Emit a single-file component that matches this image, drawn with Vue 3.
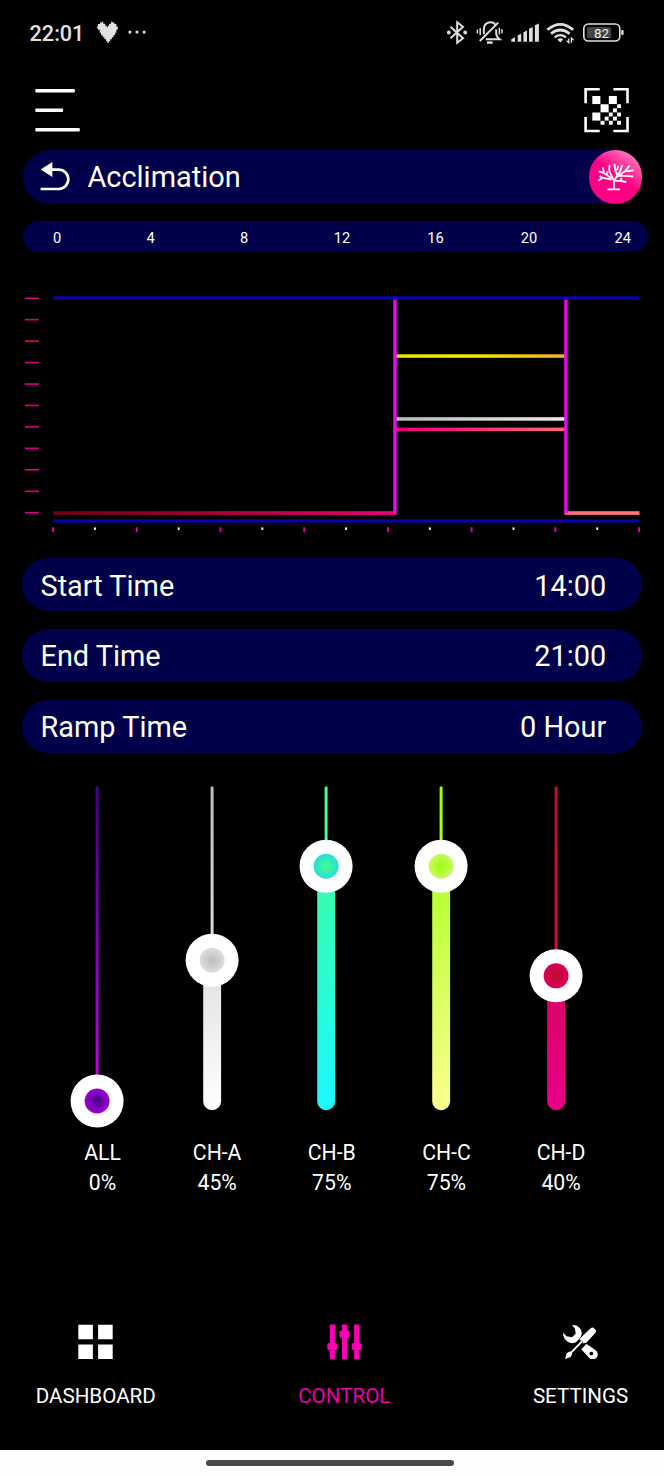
<template>
  <div class="screen">
    <header class="status-bar">
      <span class="clock">22:01</span>
      <svg class="heart" viewBox="96 21 22 23" width="22" height="23">
        <path
          d="M96.5 26.5h1.5v-2.5h2v-1.5h2v-.7h1.3v2h2v2h1.4v1.3h1v-1.3h1.4v-2h2v-2h1.3v.7h2v1.5h2v2.5h1.3v3.2h-1.3v3h-1.3v2.5h-1.6v2h-1.6v2h-1.6v2h-1.5v1.8h-1.3v-1.8h-1.5v-2h-1.6v-2h-1.6v-2h-1.8v-2.5h-1.3v-3h-1.4z"
          fill="#e2e2e2"
        />
      </svg>
      <svg class="dots" viewBox="128 30 18 5" width="18" height="5" fill="#d8d8d8">
        <circle cx="129.9" cy="32.1" r="1.6" />
        <circle cx="137" cy="32.1" r="1.6" />
        <circle cx="144.1" cy="32.1" r="1.6" />
      </svg>

      <div class="status-icons">
        <svg viewBox="446 20 22 25" width="22" height="25" fill="none" stroke="#dedede" stroke-width="2">
          <path d="M450.5 26.8L463 38.2L457.2 42.8V22.2L463 26.8L450.5 38.2" />
          <circle cx="448.8" cy="32.5" r="1.9" fill="#dedede" stroke="none" />
          <circle cx="465.2" cy="32.5" r="1.9" fill="#dedede" stroke="none" />
        </svg>
        <svg viewBox="475 20 28 25" width="28" height="25" fill="none" stroke="#dedede" stroke-width="2">
          <path d="M483.8 34.2V29.5C483.8 20.8 493.5 20.8 495.6 25.2" />
          <path d="M496.2 29.5V33.5Q496.5 37 499.6 39.3H485.8" />
          <path d="M498.2 22.6L479.8 41" />
          <path d="M487 42.6H492.6" stroke-width="2.4" />
          <path d="M477.4 29.5V33.5M480.2 28V35M499.4 27.8V34.5M502 29.2V33.3" stroke-width="1.5" />
        </svg>
        <svg viewBox="510 20 29 25" width="29" height="25" fill="#dedede">
          <path d="M511.3 41.7V39.2L515 37.2V41.7zM517.7 41.7V35.5L521.2 33.6V41.7zM523.4 41.7V32.2L527 30.4V41.7zM529 41.7V28.8L532.7 27V41.7zM534.9 41.7V25.3L538.9 23.4V41.7z" />
        </svg>
        <svg viewBox="546 20 29 25" width="29" height="25" fill="none" stroke="#dedede" stroke-width="2.7">
          <path d="M547.4 29.8Q560.3 18.8 573.2 29.8" />
          <path d="M551 33.8Q560.3 26.2 569.6 33.8" />
          <path d="M554.6 37.3Q560.3 33 566 37.3" stroke-width="2.3" />
          <path d="M557.4 39.4Q560.3 37.2 563.2 39.4L560.3 42.6z" fill="#dedede" stroke="none" />
          <path d="M568.8 38.5V42.8L566.6 40.6M571.4 42.8V38L573.6 40.2" stroke-width="1.3" />
        </svg>
        <svg viewBox="582 20 43 25" width="43" height="25">
          <rect x="583.8" y="24" width="36" height="17" rx="4.6" fill="none" stroke="#dedede" stroke-width="1.6" />
          <rect x="587" y="27" width="24.2" height="11.3" rx="2" fill="#444" />
          <rect x="621.2" y="29.9" width="2.4" height="5.2" rx="1" fill="#dedede" />
          <text x="601.6" y="37.8" class="battery-text">82</text>
        </svg>
      </div>
    </header>

    <div class="top-bar">
      <svg viewBox="35 88 45 45" width="45" height="45" fill="#fff">
        <rect x="35.3" y="89" width="39.6" height="3.5" rx="1" />
        <rect x="35.3" y="108.4" width="27.8" height="3.5" rx="1" />
        <rect x="35.3" y="127.9" width="44.5" height="3.5" rx="1" />
      </svg>
      <svg viewBox="584 88 45 45" width="45" height="45" fill="#fff">
        <path
          d="M599.7 89.3H585.6V103.2M613.4 89.3H627.5V103.2M585.6 117V131H599.7M627.5 117V131H613.4"
          fill="none"
          stroke="#fff"
          stroke-width="2.6"
        />
        <rect
          v-for="(c, i) in qrCells"
          :key="i"
          :x="592.3 + c[0] * 4.13"
          :y="96 + c[1] * 4.13"
          :width="c[2] * 4.13 - 0.2"
          :height="c[2] * 4.13 - 0.2"
        />
      </svg>
    </div>

    <div class="pill title-pill">
      <svg class="back-icon" viewBox="40 162 31 31" width="31" height="31">
        <path d="M50.5 170.6H58.6a9.7 9.7 0 0 1 0 19.4H40.6" fill="none" stroke="#fff" stroke-width="2.7" />
        <path d="M40.6 170.6L52.4 163V178z" fill="#fff" />
      </svg>
      <span class="pill-text">Acclimation</span>
      <div class="coral-badge">
        <svg viewBox="770 15 160 160" fill="none" stroke="#fff" stroke-width="5.5" stroke-linejoin="round">
          <path d="M825 133H863M845 133V106" />
          <path d="M845 108L836 88Q828 78 832 60" />
          <path d="M838 100L814 84L799 79M815 85L812 67M824 91L826 78" />
          <path d="M838 104L810 98L798 107M810 98L802 93" />
          <path d="M845 108L855 91L849 76L846 57M855 91L863 80L870 60M854 76L858 62" />
          <path d="M852 97L878 79L892 61M878 79L904 76M860 92L903 94" />
          <path d="M848 107L866 108L882 111M865 108L868 98" />
        </svg>
      </div>
    </div>

    <div class="hour-scale">
      <span v-for="h in hours" :key="h">{{ h }}</span>
    </div>

    <svg class="chart" viewBox="0 252 664 306" width="664" height="306">
      <defs>
        <linearGradient id="redLine" gradientUnits="userSpaceOnUse" x1="53" y1="0" x2="639" y2="0">
          <stop offset="0" stop-color="#6c0010" />
          <stop offset="0.3" stop-color="#b0003c" />
          <stop offset="0.6" stop-color="#f2007c" />
          <stop offset="0.9" stop-color="#ff7378" />
          <stop offset="1" stop-color="#ff7378" />
        </linearGradient>
        <linearGradient id="yellowLine" gradientUnits="userSpaceOnUse" x1="395" y1="0" x2="566" y2="0">
          <stop offset="0" stop-color="#e4e60a" />
          <stop offset="0.4" stop-color="#f6ec00" />
          <stop offset="1" stop-color="#eeb02a" />
        </linearGradient>
        <linearGradient id="greyLine" gradientUnits="userSpaceOnUse" x1="395" y1="0" x2="566" y2="0">
          <stop offset="0" stop-color="#bababa" />
          <stop offset="1" stop-color="#ebebeb" />
        </linearGradient>
      </defs>

      <rect
        v-for="n in 11"
        :key="'y' + n"
        x="24.8"
        :y="297.4 + (n - 1) * 21.45"
        width="14.2"
        height="1.7"
        fill="#d0007c"
      />

      <rect x="53" y="296.3" width="586" height="3.5" fill="#0a00aa" />
      <rect x="53" y="519.3" width="586" height="3.3" fill="#0a00aa" />

      <rect x="53" y="511.2" width="343.5" height="3.7" fill="url(#redLine)" />
      <rect x="564.5" y="511.2" width="75" height="3.7" fill="url(#redLine)" />
      <rect x="395" y="354.3" width="170" height="3.5" fill="url(#yellowLine)" />
      <rect x="395" y="417.2" width="170" height="3.5" fill="url(#greyLine)" />
      <rect x="395" y="427.6" width="170" height="3.5" fill="url(#redLine)" />

      <rect x="393.2" y="299.8" width="3.5" height="213.6" fill="#e808f0" />
      <rect x="564.2" y="299.8" width="3.5" height="213.6" fill="#e808f0" />

      <rect
        v-for="n in 15"
        :key="'x' + n"
        :x="52.1 + (n - 1) * 41.86"
        :y="n % 2 ? 527.2 : 527.4"
        width="1.9"
        :height="n % 2 ? 5 : 2.6"
        :fill="n % 2 ? '#e000a4' : '#f0f0f0'"
      />
    </svg>

    <div class="settings">
      <div v-for="row in settings" :key="row.label" class="pill setting-row">
        <span class="pill-text">{{ row.label }}</span>
        <span class="pill-text">{{ row.value }}</span>
      </div>
    </div>

    <div class="sliders">
      <div v-for="ch in channels" :key="ch.name" class="channel">
        <svg viewBox="0 0 54 344" width="54" height="344">
          <defs>
            <linearGradient :id="'track-' + ch.name" gradientUnits="userSpaceOnUse" x1="0" y1="0" x2="0" y2="324">
              <stop offset="0" :stop-color="ch.from" />
              <stop offset="1" :stop-color="ch.to" />
            </linearGradient>
            <radialGradient :id="'knob-' + ch.name">
              <stop offset="0" :stop-color="ch.from" />
              <stop offset="1" :stop-color="ch.mid" />
            </radialGradient>
          </defs>
          <rect x="25.6" y="0.3" width="3" height="315" rx="1.5" :fill="`url(#track-${ch.name})`" />
          <rect
            v-if="ch.value > 0"
            x="18.2"
            :y="knobY(ch.value)"
            width="17.9"
            :height="324.2 - knobY(ch.value)"
            rx="8.9"
            :fill="`url(#track-${ch.name})`"
          />
          <circle cx="27.1" :cy="knobY(ch.value)" r="26.5" fill="#fff" />
          <circle cx="27.1" :cy="knobY(ch.value)" r="12.5" :fill="`url(#knob-${ch.name})`" />
        </svg>
        <div class="channel-text">
          <span>{{ ch.name }}</span>
          <span>{{ ch.value }}%</span>
        </div>
      </div>
    </div>

    <nav class="bottom-nav">
      <div class="nav-item">
        <svg viewBox="79 1324 35 35.4" width="35" height="35.4" fill="#fff">
          <path d="M79.3 1324.7h14.6v14.5H79.3zM99.1 1324.7h14.6v14.5H99.1zM79.3 1344.5h14.6v14.5H79.3zM99.1 1344.5h14.6v14.5H99.1z" />
        </svg>
        <span>DASHBOARD</span>
      </div>
      <div class="nav-item active">
        <svg viewBox="327 1324 35 35.4" width="35" height="35.4" fill="#fa00b4">
          <path d="M329.8 1324.6h5.1v34.5h-5.1zM342 1324.6h5.1v34.5H342zM354.1 1324.6h5.1v34.5h-5.1z" />
          <rect x="327.3" y="1343" width="10" height="7.2" rx="1.8" />
          <rect x="339.5" y="1330.5" width="10" height="7.2" rx="1.8" />
          <rect x="351.7" y="1343" width="10" height="7.2" rx="1.8" />
        </svg>
        <span>CONTROL</span>
      </div>
      <div class="nav-item">
        <svg viewBox="189 72 105 106.2" width="35" height="35.4" fill="#fff">
          <path d="M216 75C232 74 247 86 245 102Q244 109 240 114L228 127C210 136 188 119 189 98L200 109L216 112L227 101L225 86z" />
          <path d="M259 131L286 150A14 14 0 0 1 270 176L244 148zM274 155a5.5 5.5 0 1 0 .1 0z" fill-rule="evenodd" />
          <path d="M250 119L280 91" stroke="#000" stroke-width="23" />
          <path d="M272 85Q276 81 280 83L288 91Q290 95 286 99L259 128L241 131L239 116z" />
          <path d="M246 124L211 160" stroke="#000" stroke-width="11" />
          <path d="M246 124L211 160" stroke="#fff" stroke-width="5.5" />
          <path d="M195 177L200 160L210 154L217 161L212 171z" />
        </svg>
        <span>SETTINGS</span>
      </div>
    </nav>

    <div class="gesture-bar">
      <div class="gesture-handle"></div>
    </div>
  </div>
</template>

<script setup>
import { ref } from 'vue';

const hours = [0, 4, 8, 12, 16, 20, 24];

// [col, row, size]
const qrCells = [
  [0, 0, 2], [4, 0, 2], [2, 2, 2], [0, 4, 2],
  [6, 2, 1], [5, 3, 1], [4, 4, 1], [6, 4, 1],
  [3, 5, 1], [5, 5, 1], [2, 6, 1], [4, 6, 1], [6, 6, 1]
];

const settings = ref([
  { label: 'Start Time', value: '14:00' },
  { label: 'End Time', value: '21:00' },
  { label: 'Ramp Time', value: '0 Hour' }
]);

const channels = ref([
  { name: 'ALL', value: 0, from: '#40008c', mid: '#a400d4', to: '#cc00f0' },
  { name: 'CH-A', value: 45, from: '#bcbcbc', mid: '#dedede', to: '#ffffff' },
  { name: 'CH-B', value: 75, from: '#42ff8c', mid: '#2adcdc', to: '#1cf8ff' },
  { name: 'CH-C', value: 75, from: '#96ff0a', mid: '#cdf763', to: '#ffff90' },
  { name: 'CH-D', value: 40, from: '#c00c28', mid: '#d8005c', to: '#e80088' }
]);

// 0% sits at the bottom of the track
const knobY = (value) => 315 - value * 3.13;
</script>

<style>
body {
  margin: 0;
  background-color: #000;
}
</style>

<style scoped>
.screen {
  display: flex;
  flex-direction: column;
  width: 664px;
  height: 1476px;
  overflow: hidden;
  background-color: #000;
  color: #fff;
  font-family: Roboto, "Liberation Sans", sans-serif;
}

svg {
  display: block;
  flex-shrink: 0;
}

.status-bar {
  display: flex;
  align-items: center;
  box-sizing: border-box;
  height: 65px;
  padding: 0 39px 0 29.6px;
}

.clock {
  width: 66.4px;
  padding-top: 1px;
  font-size: 21.6px;
  font-weight: 500;
  line-height: 25px;
  color: #e0e0e0;
}

.dots {
  margin-left: 10px;
}

.status-icons {
  display: flex;
  justify-content: space-between;
  width: 179px;
  margin-left: auto;
}

.battery-text {
  font-size: 13.4px;
  font-weight: 400;
  fill: #f0f0f0;
  text-anchor: middle;
}

.top-bar {
  display: flex;
  justify-content: space-between;
  box-sizing: border-box;
  height: 85.3px;
  padding: 23px 35px 0;
}

.pill {
  display: flex;
  align-items: center;
  box-sizing: border-box;
  height: 52.8px;
  border-radius: 27px;
  background-color: #00004b;
}

.pill-text {
  font-size: 28.9px;
  line-height: 36px;
  white-space: nowrap;
}

.title-pill {
  flex-shrink: 0;
  height: 53.3px;
  margin: 0 22px 0 22.5px;
  padding-left: 17px;
}

.title-pill .pill-text {
  margin-left: 17px;
  padding-top: 1px;
}

.coral-badge {
  width: 53.3px;
  height: 53.3px;
  margin-left: auto;
  border-radius: 50%;
  background: linear-gradient(215deg, #ff86c2 8%, #ff0084 48%);
}

.hour-scale {
  display: grid;
  grid-template-columns: repeat(7, 93.6px);
  align-items: center;
  flex-shrink: 0;
  box-sizing: border-box;
  height: 31.4px;
  margin: 17.4px 15.7px 0 22.7px;
  padding: 2px 0 0 30.2px;
  border-radius: 16px;
  background-color: #00004b;
  overflow: hidden;
  font-size: 14.7px;
  line-height: 18px;
}

.settings {
  display: flex;
  flex-direction: column;
  gap: 17.9px;
  margin: 0 22.3px;
}

.setting-row {
  justify-content: space-between;
  padding: 2px 35.4px 0 18.2px;
}

.sliders {
  display: flex;
  justify-content: space-between;
  margin: 33.8px 81.4px 0 70px;
}

.channel {
  display: flex;
  flex-direction: column;
  width: 54px;
}

.channel-text {
  display: flex;
  flex-direction: column;
  align-items: center;
  width: 65px;
  margin-top: 7.6px;
  font-size: 21.2px;
  line-height: 29.6px;
  white-space: nowrap;
}

.bottom-nav {
  display: flex;
  justify-content: space-between;
  margin-top: auto;
  padding: 0 35.7px;
  height: 126px;
}

.nav-item {
  display: flex;
  flex-direction: column;
  align-items: center;
  gap: 23.8px;
  font-size: 20.6px;
  line-height: 26px;
}

.nav-item.active {
  color: #ee00aa;
}

.gesture-bar {
  display: flex;
  justify-content: center;
  align-items: center;
  flex-shrink: 0;
  box-sizing: border-box;
  height: 26.5px;
  padding-right: 4px;
  background-color: #fdfdfd;
}

.gesture-handle {
  width: 248px;
  height: 6px;
  border-radius: 3px;
  background-color: #4a4a4a;
}
</style>
